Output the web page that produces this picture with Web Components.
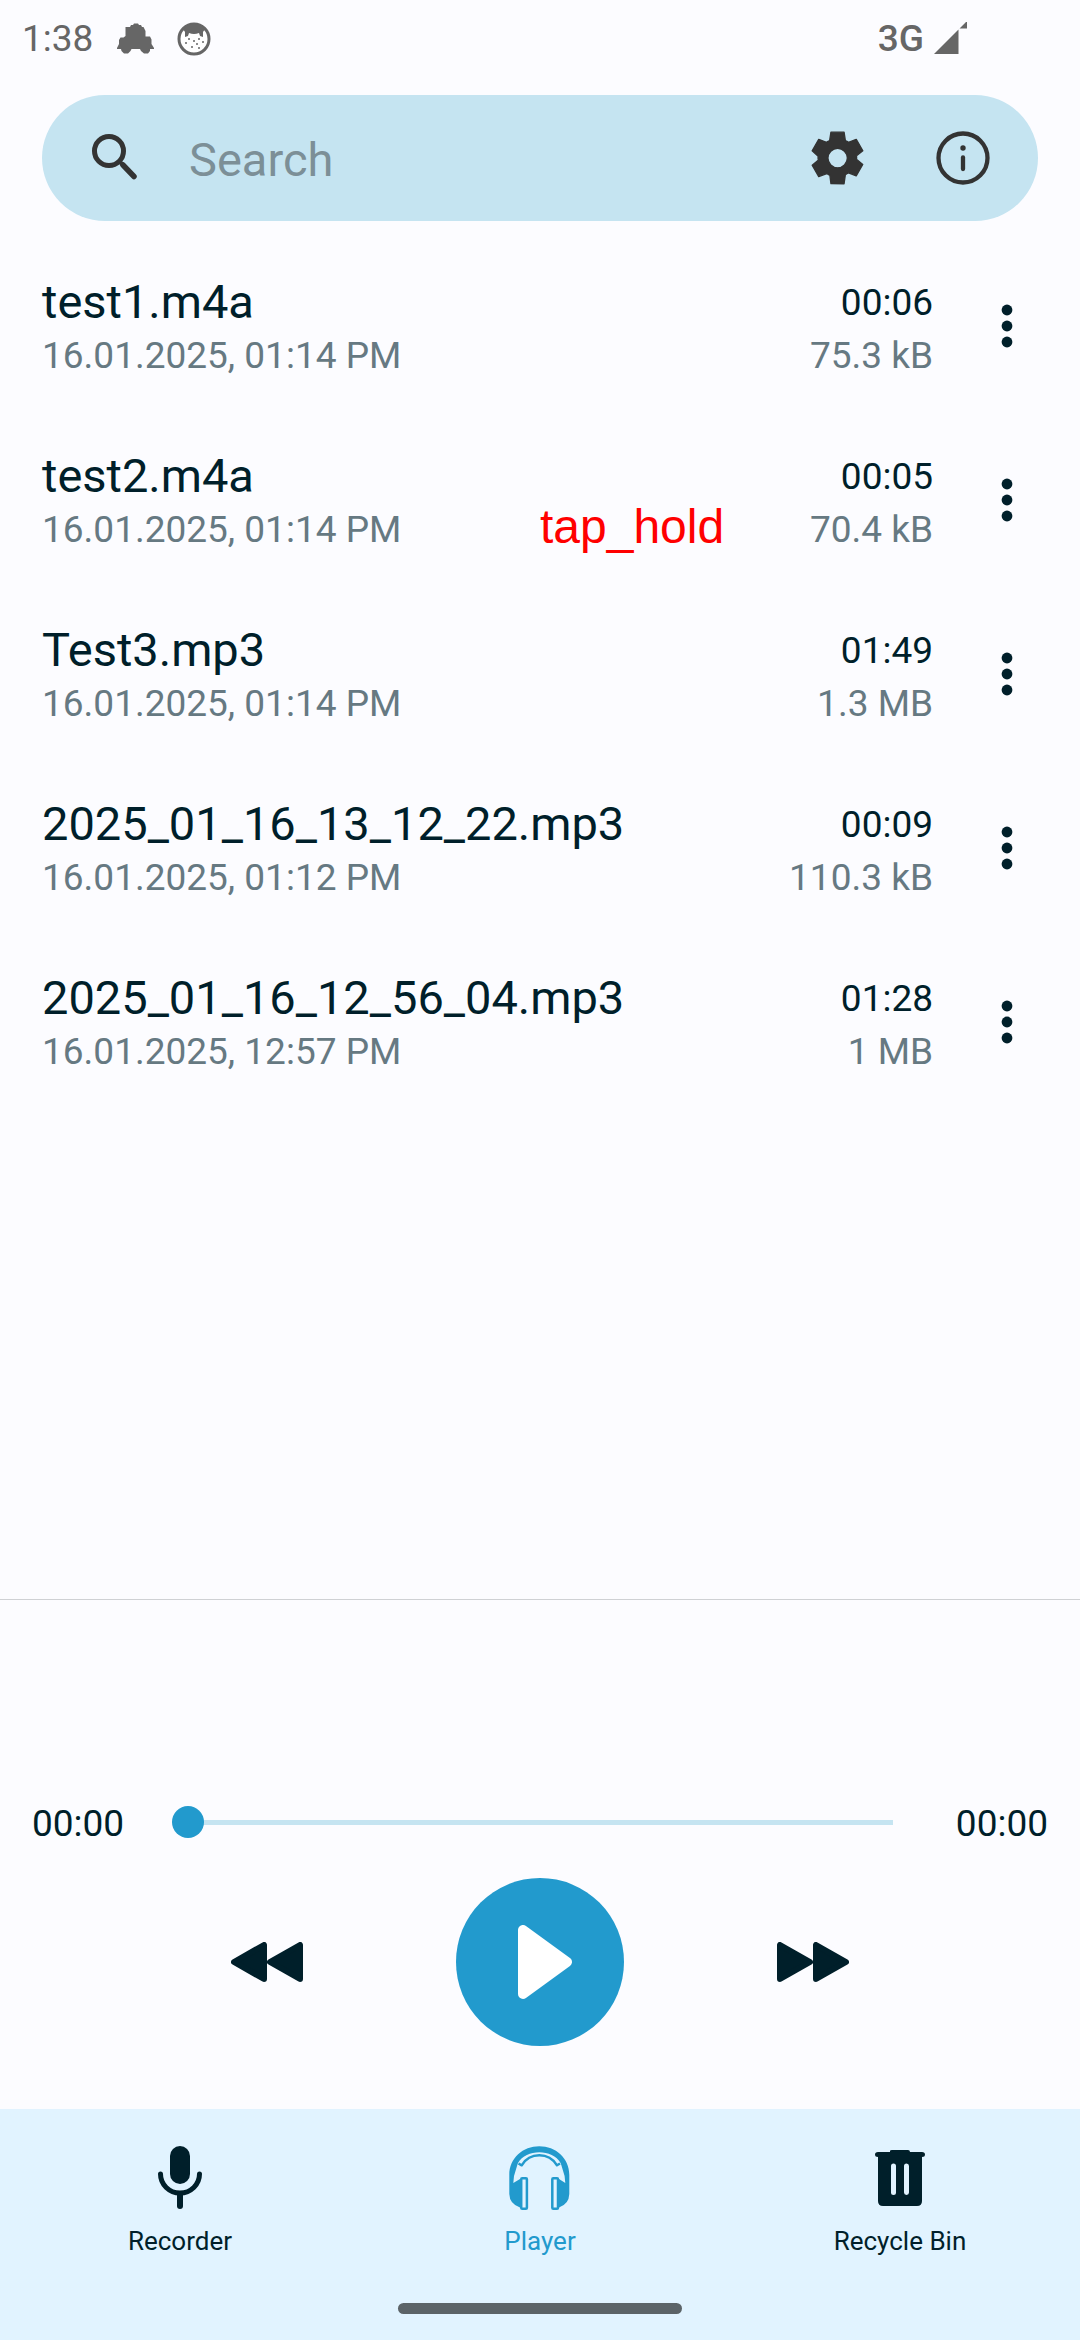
<!DOCTYPE html>
<html lang="en">
<head>
<meta charset="utf-8">
<meta name="viewport" content="width=device-width, initial-scale=1">
<title>Player</title>
<style>
  html, body { height: 100%; }
  body {
    margin: 0;
    background: #fcfcff;
    font-family: Roboto, "Noto Sans", sans-serif;
    --ink: #001f2a;
    --muted: #667982;
    --accent: #229acd;
    --tint: #c5e4f1;
    --nav: #e1f3ff;
    --system: #666666;
    --body-size: 37px;
    --title-size: 47px;
    color: var(--ink);
  }
</style>
</head>
<body>
<recorder-app></recorder-app>
<script>
const define = (name, html, setup) => {
  const template = document.createElement('template');
  template.innerHTML = html;
  customElements.define(name, class extends HTMLElement {
    connectedCallback() {
      if (this.shadowRoot) return;
      const root = this.attachShadow({ mode: 'open' });
      root.append(template.content.cloneNode(true));
      if (setup) setup(root, this);
    }
  });
};

const buttonReset = `
  button { display: grid; place-items: center; padding: 0; border: 0; margin: 0;
    background: none; color: inherit; font: inherit; cursor: pointer; }
  svg { display: block; }
`;

define('status-bar', `
  <style>
    :host { display: flex; align-items: center; height: 77px; padding: 0 112px 0 22px;
      color: var(--system); font-size: var(--body-size); line-height: 44px; }
    svg { display: block; }
    .car { margin-left: 24px; }
    .face { margin-left: 22px; }
    .net { margin-left: auto; font-weight: 500; }
    .signal { margin-left: 10px; }
  </style>
  <span>1:38</span>
  <svg class="car" width="38" height="32" viewBox="0 0 38 32" fill="currentColor" aria-hidden="true">
    <path d="M8.500 4H13l1-2h2l1-1.500h4L22 2h2l1 2h1.500l2 4v5.500H33l1.500 3V21l2.500 4v1h-4v2l-2 2.500h-4l-3-2.500-1-2h-8.500l-1 2-2.500 2.500H7L4.500 28 4 26H0v-1l2-4v-4l1.500-2.500h3l2-1.500z"/>
  </svg>
  <svg class="face" width="34" height="34" viewBox="0 0 34 34" fill="currentColor" aria-hidden="true">
    <circle cx="17" cy="17" r="15" fill="#fff" stroke="currentColor" stroke-width="3"/>
    <path d="M6 7Q17-3 28 7l-2 3v5l-3-1-1-3q-5 2-10 0l-1 3-3 1v-5z"/>
    <circle cx="12" cy="17" r="1"/><circle cx="22" cy="17" r="1"/><circle cx="9" cy="21" r="1"/>
    <circle cx="20" cy="22" r="1"/><circle cx="15" cy="25" r="1"/><circle cx="26" cy="20" r="1"/>
    <circle cx="17" cy="19" r="1"/><circle cx="22" cy="26" r="1"/>
  </svg>
  <span class="net">3G</span>
  <svg class="signal" width="34" height="34" viewBox="0 1 34 34" fill="currentColor" aria-hidden="true">
    <path d="M0 33 24.500 8.500V33zM25.500 7.500 33 0V7.500z"/>
  </svg>
`);

define('search-bar', `
  <style>${buttonReset}
    :host { display: flex; align-items: center; height: 126px; margin: 18px 42px 0; padding: 0 12px 0 10px;
      border-radius: 63px; background: var(--tint); color: #333333; box-sizing: border-box; }
    label, button { display: grid; place-items: center; flex: 0 0 126px; height: 126px; }
    input { flex: 1; min-width: 0; height: 126px; padding: 2px 0 0 11px; border: 0; outline: 0; background: none;
      box-sizing: border-box; color: var(--ink); font: inherit; font-size: var(--title-size); }
    input::placeholder { color: #7c8f97; opacity: 1; }
  </style>
  <label for="q" aria-label="Search recordings">
    <svg width="48" height="48" viewBox="1 2 48 48" fill="none" stroke="currentColor" aria-hidden="true">
      <circle cx="19" cy="19" r="14.500" stroke-width="5"/>
      <path d="M33 33 44 44.500" stroke-width="5.500" stroke-linecap="round"/><path d="M29.500 29.500 34 34" stroke-width="4"/>
    </svg>
  </label>
  <input id="q" type="text" placeholder="Search">
  <button type="button" aria-label="Settings">
    <svg width="63" height="63" viewBox="0 0.2 24 24" fill="currentColor" stroke="currentColor" stroke-width=".5" stroke-linejoin="round" aria-hidden="true">
      <path d="M9.500 21.800l-.4-3.200q-.325-.125-.612-.3t-.563-.375L4.850 19.100l-2.500-4.350 2.400-1.950Q4.600 12.500 4.600 12.337v-.675q0-.162.025-.337L2.350 9.250l2.500-4.350 2.975 1.150q.275-.2.575-.375t.6-.3l.5-3.200h5l.5 3.200q.325.125.613.300t.562.375l2.975-1.150 2.500 4.350-2.400 1.900q.025.175.025.337v.675q0 .163-.05.338l2.400 1.950-2.500 4.350-2.950-1.150q-.275.200-.575.375t-.6.300l-.5 3.500zm2.550-6.050q1.500 0 2.600-1.100t1.100-2.600-1.100-2.600-2.600-1.100-2.600 1.100-1.100 2.600 1.100 2.600 2.600 1.100"/>
    </svg>
  </button>
  <button type="button" aria-label="About">
    <svg width="54" height="54" viewBox="0 0 54 54" fill="none" stroke="currentColor" stroke-linecap="round" aria-hidden="true">
      <circle cx="27" cy="27" r="24.500" stroke-width="4.300"/>
      <path d="M27 26.500v11.500" stroke-width="4.300"/><circle cx="27" cy="17" r="2.700" fill="currentColor" stroke="none"/>
    </svg>
  </button>
`);

define('recording-row', `
  <style>${buttonReset}
    :host { position: relative; display: flex; align-items: center; height: 174px; padding-left: 42px; }
    .file, .info { display: flex; flex-direction: column; }
    .file { flex: 1; min-width: 0; }
    .info { align-items: flex-end; }
    .name, .time { height: 58px; }
    .name { font-size: var(--title-size); line-height: 58px; }
    .time { line-height: 60px; }
    .time, .date, .size { font-size: var(--body-size); }
    .date, .size { height: 48px; line-height: 50px; color: var(--muted); }
    button { width: 147px; height: 126px; }
    ::slotted(tap-note) { position: absolute; left: 50%; top: 86px; }
  </style>
  <div class="file"><span class="name"></span><span class="date"></span></div>
  <div class="info"><span class="time"></span><span class="size"></span></div>
  <button type="button" aria-label="More options">
    <svg width="12" height="44" viewBox="0 0 12 44" fill="currentColor" aria-hidden="true">
      <circle cx="6" cy="6" r="5.400"/><circle cx="6" cy="22" r="5.400"/><circle cx="6" cy="38" r="5.400"/>
    </svg>
  </button>
  <slot></slot>
`, (root, host) => {
  for (const key of ['name', 'date', 'time', 'size']) {
    root.querySelector('.' + key).textContent = host.getAttribute(key);
  }
});

define('tap-note', `
  <style>
    :host { display: block; color: #ff0000; font-family: "Liberation Sans", Arial, sans-serif;
      font-size: 48px; line-height: 56px; }
  </style>
  <slot></slot>
`);

define('player-panel', `
  <style>${buttonReset}
    :host { display: block; height: 510px; padding-top: 190px; box-sizing: border-box; border-top: 1px solid #cfd1d4; }
    .progress { display: flex; align-items: center; gap: 48px; height: 64px; padding: 0 32px; font-size: var(--body-size); }
    .progress span { line-height: 44px; padding-top: 3px; }
    input { -webkit-appearance: none; appearance: none; flex: 1; min-width: 0; height: 32px; margin: 0 15px 0 0; background: none; }
    input::-webkit-slider-runnable-track { height: 5px; background: linear-gradient(var(--tint), var(--tint)) 16px 0 no-repeat; }
    input::-webkit-slider-thumb { -webkit-appearance: none; width: 32px; height: 32px; margin-top: -14px; border-radius: 50%; background: var(--accent); }
    .controls { display: grid; grid-template-columns: 1fr 1fr 1fr; justify-items: center; align-items: center; padding: 24px 0 0; }
    .controls button { width: 126px; height: 126px; }
    .controls .play { width: 168px; height: 168px; border-radius: 50%; background: var(--accent); color: #fff; }
    .back { justify-self: end; margin-right: 30px; }
    .ahead { justify-self: start; margin-left: 30px; }
  </style>
  <div class="progress">
    <span>00:00</span>
    <input type="range" min="0" max="100" value="0" aria-label="Playback position">
    <span>00:00</span>
  </div>
  <div class="controls">
    <button class="back" type="button" aria-label="Rewind">
      <svg width="72" height="40" viewBox="0 0 72 40" fill="currentColor" stroke="currentColor" stroke-width="6" stroke-linejoin="round" aria-hidden="true">
        <path d="M3 20 33 3V37zM39 20 69 3V37z"/>
      </svg>
    </button>
    <button class="play" type="button" aria-label="Play">
      <svg width="64" height="74" viewBox="0 0 64 74" fill="currentColor" stroke="currentColor" stroke-width="10" stroke-linejoin="round" aria-hidden="true">
        <path d="M15 5V69L59 37z"/>
      </svg>
    </button>
    <button class="ahead" type="button" aria-label="Fast forward">
      <svg width="72" height="40" viewBox="0 0 72 40" fill="currentColor" stroke="currentColor" stroke-width="6" stroke-linejoin="round" aria-hidden="true">
        <path d="M3 3V37L33 20zM39 3V37L69 20z"/>
      </svg>
    </button>
  </div>
`);

define('nav-item', `
  <style>
    :host { display: block; flex: 1; }
    button { display: flex; flex-direction: column; align-items: center; gap: 15px; width: 100%; padding: 37px 0 0; border: 0;
      background: none; color: inherit; font: inherit; font-size: 26px; line-height: 32px; cursor: pointer; }
    :host([selected]) { color: var(--accent); }
    ::slotted(svg) { display: block; }
  </style>
  <button type="button"><slot name="icon"></slot><slot></slot></button>
`);

define('nav-bar', `
  <style>
    :host { display: flex; flex-direction: column; height: 231px; background: var(--nav); }
    nav { display: flex; }
    .handle { width: 284px; height: 11px; margin: auto auto 26px; border-radius: 6px; background: #5b6368; }
  </style>
  <nav aria-label="Tabs">
    <nav-item>
      <svg slot="icon" width="64" height="64" viewBox="0 0 64 64" fill="none" stroke="currentColor" stroke-linecap="round" aria-hidden="true">
        <rect x="22" y="0" width="20" height="38" rx="10" fill="currentColor" stroke="none"/>
        <path d="M12.500 28a19.500 19 0 0 0 39 0" stroke-width="5"/><path d="M32 48v12" stroke-width="6"/>
      </svg>
      Recorder
    </nav-item>
    <nav-item selected>
      <svg slot="icon" width="64" height="64" viewBox="0 0 64 64" fill="currentColor" aria-hidden="true">
        <path d="M1.300 48V29C1.300 12 15 .3 31.300 .3S61.300 12 61.300 29V48Q61 58 51 61.500V33L57.300 37 56.600 30 53.300 19 52.600 17C44.600 2.500 18 2.500 10 17L9.300 19 6 30 5.300 37 12 33V61.500Q1.600 58 1.300 48z"/>
        <path d="M10.500 17.500 13.700 19.300C22 6 40.600 6 49 19.300L52 17.500" fill="none" stroke="currentColor" stroke-width="2.500" stroke-linejoin="round"/>
        <rect x="13.200" y="32.300" width="5.700" height="30.400" rx="1" fill="#e1f3ff" stroke="currentColor" stroke-width="2.500"/>
        <rect x="44.300" y="32.300" width="5.700" height="30.400" rx="1" fill="#e1f3ff" stroke="currentColor" stroke-width="2.500"/>
      </svg>
      Player
    </nav-item>
    <nav-item>
      <svg slot="icon" width="64" height="64" viewBox="0 0 64 64" fill="currentColor" aria-hidden="true">
        <path fill-rule="evenodd" d="M22 5q0-1 2-1h16q2 0 2 2h12q3 0 3 2.500T54 11v44q0 5-5 5H15q-5 0-5-5V11q-3 0-3-2.500T10 6h12zM23 20v26.500a2.500 2.500 0 0 0 5 0V20a2.500 2.500 0 0 0-5 0zm13 0v26.500a2.500 2.500 0 0 0 5 0V20a2.500 2.500 0 0 0-5 0z"/>
      </svg>
      Recycle Bin
    </nav-item>
  </nav>
  <div class="handle"></div>
`);

define('recorder-app', `
  <style>
    :host { display: flex; flex-direction: column; min-height: 100vh; }
    main { flex: 1; padding-top: 18px; }
  </style>
  <status-bar></status-bar>
  <search-bar></search-bar>
  <main>
    <recording-row name="test1.m4a" date="16.01.2025, 01:14 PM" time="00:06" size="75.3 kB"></recording-row>
    <recording-row name="test2.m4a" date="16.01.2025, 01:14 PM" time="00:05" size="70.4 kB"><tap-note>tap_hold</tap-note></recording-row>
    <recording-row name="Test3.mp3" date="16.01.2025, 01:14 PM" time="01:49" size="1.3 MB"></recording-row>
    <recording-row name="2025_01_16_13_12_22.mp3" date="16.01.2025, 01:12 PM" time="00:09" size="110.3 kB"></recording-row>
    <recording-row name="2025_01_16_12_56_04.mp3" date="16.01.2025, 12:57 PM" time="01:28" size="1 MB"></recording-row>
  </main>
  <player-panel></player-panel>
  <nav-bar></nav-bar>
`);
</script>
</body>
</html>
